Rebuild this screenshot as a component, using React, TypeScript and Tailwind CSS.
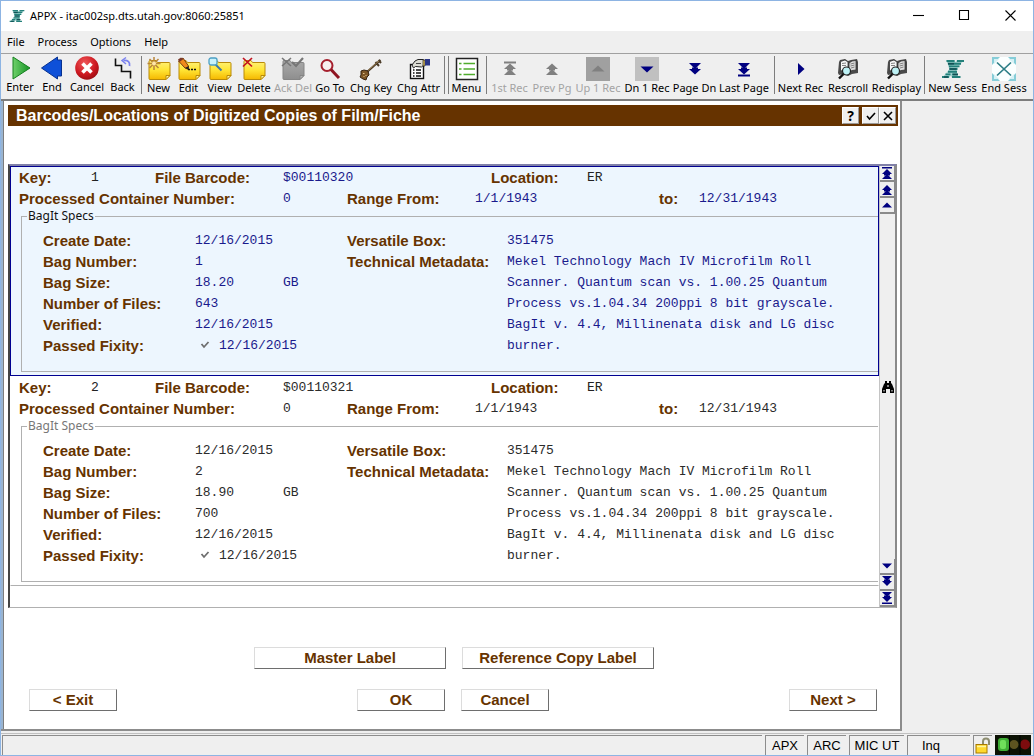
import type { ReactNode } from "react";

const NAVY = "#000080";
const GREY = "#808080";

function XLogo({ className }: { className: string }) {
  return (
    <svg viewBox="0 0 24 24" className={className} aria-hidden="true">
      <path d="M5.500 3h8l3.500 18h-6z" fill="#8cc4c0" />
      <path d="M16 3h7L8 21H1z" fill="#a5d3d0" />
      <path d="M5.500 4h8M16 4h7M7 6.700h7M14 6.700h6M8 9.400h10.500M8.500 12h8M7 14.700h9M4.500 17.400h5M11 17.400h6M1 20h7M11 20h8.500" stroke="#23807a" strokeWidth="1.900" />
      <path d="M7 6.700h6M8.500 12h7M12 17.400h5M3 20h4" stroke="#154f55" strokeWidth="1.500" />
    </svg>
  );
}

function Svg({ children }: { children: ReactNode }) {
  return (
    <svg viewBox="0 0 24 24" className="h-6 w-6" aria-hidden="true">
      {children}
    </svg>
  );
}

function Folder({ grey = false }: { grey?: boolean }) {
  const edge = grey ? "#858585" : "#b98a08";
  return (
    <>
      <defs>
        <linearGradient id={grey ? "note-grey" : "note"} x1="0" y1="0" x2="0" y2="1">
          <stop offset="0" stopColor={grey ? "#a8a8a8" : "#fff27e"} />
          <stop offset=".5" stopColor={grey ? "#9c9c9c" : "#ffe535"} />
          <stop offset="1" stopColor={grey ? "#8e8e8e" : "#f5b800"} />
        </linearGradient>
      </defs>
      <path d="M2 4.500Q2 3.500 3 3.500H9L10.500 5.500H22Q23 5.500 23 6.500V18.500L19 22.500H3Q2 22.500 2 21.500Z" fill={grey ? "url(#note-grey)" : "url(#note)"} stroke={edge} strokeWidth="1" />
      <path d="M23 18.500h-4v4z" fill={grey ? "#b5b5b5" : "#fff6a0"} stroke={edge} strokeWidth="1" />
    </>
  );
}

function Chevrons({ dir, count, bar, color }: { dir: "up" | "down"; count: number; bar?: boolean; color: string }) {
  return (
    <g transform={dir === "down" ? "rotate(180 12 12)" : undefined}>
      {count === 1 ? (
        <path d="M5.500 14.500h13l-6.500-6z" fill={color} />
      ) : (
        <>
          <path d="M6 12h12l-6-5.500z" fill={color} />
          <path d="M6 18h12l-6-6z" fill={color} />
          <path d="M6 12.500h12" stroke="#efefef" strokeWidth="1" />
          <path d="M9 13.500h6v-2H9z" fill={color} />
        </>
      )}
      {bar && <path d="M6 5.500h12" stroke={color} strokeWidth="2" />}
    </g>
  );
}

function Book() {
  return (
    <>
      <path d="M3 5l1-2 5-1 3 2 3-1 6-1 1 3v11l-6 1-4 2-4-2-5 1-1-2z" fill="#4a4a4a" />
      <path d="M4.500 4.500L9 3l3 2v9.500l-3-1.500-4.500 1z" fill="#f6f6f6" stroke="#333" strokeWidth=".8" />
      <path d="M20 3.500l-4 .5-3 2v9l3-1.500 4-.5z" fill="#dedede" stroke="#333" strokeWidth=".8" />
      <path d="M6 6.500l4-.5M6 8.500h4M14.500 7l4-1M14.500 9l4-1M15 11l3.500-1" stroke="#777" strokeWidth=".9" />
      <circle cx="10.500" cy="14" r="4" fill="#bdf1f5" stroke="#222" strokeWidth="1.200" />
      <path d="M7.500 17l-4.500 4.500" stroke="#111" strokeWidth="2.400" />
    </>
  );
}

type Tool = { label: string; width: string; icon: ReactNode; off?: boolean };

const groups: Tool[][] = [
  [
    {
      label: "Enter",
      width: "w-[34px]",
      icon: (
        <>
          <defs>
            <linearGradient id="go" x1="0" y1="0" x2="1" y2="0">
              <stop offset="0" stopColor="#6fd06a" />
              <stop offset="1" stopColor="#149324" />
            </linearGradient>
          </defs>
          <path d="M5 1l17 11L5 23z" fill="url(#go)" stroke="#15801f" />
        </>
      ),
    },
    { label: "End", width: "w-[30px]", icon: <path d="M17.500 1v3h4v16h-4v3L1.500 12z" fill="#0e50d8" stroke="#07318f" /> },
    {
      label: "Cancel",
      width: "w-[40px]",
      icon: (
        <>
          <defs>
            <radialGradient id="stop" cx=".4" cy=".3" r=".8">
              <stop offset="0" stopColor="#f0585a" />
              <stop offset=".6" stopColor="#cc1820" />
              <stop offset="1" stopColor="#8d0b10" />
            </radialGradient>
          </defs>
          <circle cx="12" cy="12" r="11.800" fill="url(#stop)" />
          <path d="M7.500 7.500l9 9M16.500 7.500l-9 9" stroke="#fff" strokeWidth="3.600" />
        </>
      ),
    },
    {
      label: "Back",
      width: "w-[31px]",
      icon: (
        <>
          <path d="M4.500 2.500v7h6v6h9v7" fill="none" stroke="#111" strokeWidth="1.600" />
          <path d="M18.500 10q1-6-6-5.500" fill="none" stroke="#7c83ee" strokeWidth="1.800" />
          <path d="M15 1.500l-4 3 4 3.500" fill="none" stroke="#7c83ee" strokeWidth="1.500" />
        </>
      ),
    },
  ],
  [
    {
      label: "New",
      width: "w-[29px]",
      icon: (
        <>
          <Folder />
          <path d="M7 0v13M.5 6.500h13M2.500 2l9 9M11.500 2l-9 9" stroke="#b9853a" strokeWidth="1.500" />
          <circle cx="7" cy="6.500" r="2" fill="#ffe6a8" />
        </>
      ),
    },
    {
      label: "Edit",
      width: "w-[31px]",
      icon: (
        <>
          <Folder />
          <path d="M1.500 4L6 1l5.500 8v3.500L8 11z" fill="#f08a1c" stroke="#6b3108" strokeWidth=".9" />
          <path d="M1 2.500L4 .5 6.500 2 2.500 5z" fill="#7a3a2a" />
          <path d="M8 11l3.500 1.500V9z" fill="#222" />
          <path d="M11 12.500h2m1 0h2m1 0h2" stroke="#111" strokeWidth="1.600" />
        </>
      ),
    },
    {
      label: "View",
      width: "w-[31px]",
      icon: (
        <>
          <Folder />
          <path d="M7 7l6.500 6.500" stroke="#3e76a8" strokeWidth="2" />
          <rect x="1" y="1" width="8" height="7" rx="2" fill="#c9f2fb" stroke="#4b9fc4" strokeWidth="1.300" />
        </>
      ),
    },
    {
      label: "Delete",
      width: "w-[38px]",
      icon: (
        <>
          <Folder />
          <path d="M1 1l9 8.500M10 1L1 9.500" stroke="#c3121d" strokeWidth="1.700" />
        </>
      ),
    },
    {
      label: "Ack Del",
      width: "w-[40px]",
      off: true,
      icon: (
        <>
          <Folder grey />
          <path d="M1 1l9 8M10 1L1 9" stroke="#777" strokeWidth="1.600" />
          <path d="M11 5l4 4 7-8" fill="none" stroke="#777" strokeWidth="2.200" />
        </>
      ),
    },
    {
      label: "Go To",
      width: "w-[34px]",
      icon: (
        <>
          <circle cx="9" cy="8.500" r="5.500" fill="#f8eeee" stroke="#a51f2d" strokeWidth="2" />
          <path d="M13 12.500l8 8.500" stroke="#8f1522" strokeWidth="3" />
        </>
      ),
    },
    {
      label: "Chg Key",
      width: "w-[48px]",
      icon: (
        <>
          <path d="M8 15L21.500 3M16.500 5l3.500 4M19.500 3l2.500 3" stroke="#4a3a26" strokeWidth="2" />
          <path d="M9 13.500L20 4" stroke="#a98a58" strokeWidth=".8" />
          <path d="M2 14l3-1 4 1 1 4-2 2-1 3-3-1-3-2 1-2z" fill="#7d5524" stroke="#352210" strokeWidth="1" />
          <path d="M4 16.500h1.500M6.500 18.500h1M4.500 19.500h1" stroke="#e3c48d" strokeWidth="1.200" />
        </>
      ),
    },
    {
      label: "Chg Attr",
      width: "w-[47px]",
      icon: (
        <>
          <rect x="3.500" y="7.500" width="13" height="14" fill="#fff" stroke="#111" strokeWidth="1.400" />
          <path d="M6 13h1.500m1.500 0h5M6 16h1.500m1.500 0h5M6 19h1.500m1.500 0h5" stroke="#111" strokeWidth="1.300" />
          <path d="M5 8l3-4 3-1.500h5l1.500 1v4l-3 2.500-6-.5-2 1.500z" fill="#dcdcd4" stroke="#222" />
          <path d="M9 6.500h5" stroke="#444" />
          <path d="M16 3h2v6h-2z" fill="#e8c65a" stroke="#222" strokeWidth=".7" />
          <path d="M18 2h5v6.500h-5z" fill="#2b3686" />
        </>
      ),
    },
  ],
  [
    {
      label: "Menu",
      width: "w-[33px]",
      icon: (
        <>
          <rect x="1.500" y="1.500" width="21" height="21" fill="#fff" stroke="#222" strokeWidth="1.500" />
          <path d="M8.500 6.500H20M8.500 12H20M8.500 17.500H20M4 6.500h2.500M4 12h2.500M4 17.500h2.500" stroke="#4fac2c" strokeWidth="1.700" />
        </>
      ),
    },
  ],
  [
    { label: "1st Rec", width: "w-[41px]", off: true, icon: <Chevrons dir="up" count={2} bar color={GREY} /> },
    { label: "Prev Pg", width: "w-[44px]", off: true, icon: <Chevrons dir="up" count={2} color={GREY} /> },
    {
      label: "Up 1 Rec",
      width: "w-[48px]",
      off: true,
      icon: (
        <>
          <path d="M0 0h24v24H0z" fill="#a0a0a0" />
          <Chevrons dir="up" count={1} color="#808080" />
        </>
      ),
    },
    {
      label: "Dn 1 Rec",
      width: "w-[50px]",
      icon: (
        <>
          <path d="M0 0h24v24H0z" fill="#c0c0c0" />
          <Chevrons dir="down" count={1} color={NAVY} />
        </>
      ),
    },
    { label: "Page Dn", width: "w-[45px]", icon: <Chevrons dir="down" count={2} color={NAVY} /> },
    { label: "Last Page", width: "w-[54px]", icon: <Chevrons dir="down" count={2} bar color={NAVY} /> },
  ],
  [
    { label: "Next Rec", width: "w-[47px]", icon: <path d="M9 6v12l6.500-6z" fill={NAVY} /> },
    { label: "Rescroll", width: "w-[48px]", icon: <Book /> },
    { label: "Redisplay", width: "w-[49px]", icon: <Book /> },
  ],
  [
    { label: "New Sess", width: "w-[51px]", icon: <XLogo className="h-6 w-6" /> },
    {
      label: "End Sess",
      width: "w-[52px]",
      icon: (
        <>
          <path d="M0 0h24v24H0z" fill="#fbffff" />
          <path d="M0 0h8L0 8zM24 0h-8l8 8zM0 24h8l-8-8zM24 24h-8l8-8z" fill="#86cdd8" />
          <path d="M2 2h5L2 7zM22 2h-5l5 5zM2 22h5l-5-5zM22 22h-5l5-5z" fill="#d5f1f5" />
          <path d="M5 5.500l14 13M19 5.500l-14 13" stroke="#2c7e86" strokeWidth="1.700" />
        </>
      ),
    },
  ],
];

const seps = ["", "single", "double", "single", "single", "single"];

function Separator({ double }: { double: boolean }) {
  return (
    <div className={double ? "flex w-2 shrink-0 justify-center gap-[3px]" : "flex w-[6px] shrink-0 justify-center"}>
      <div className="h-[38px] w-px bg-[#7d7d7d]" />
      {double && <div className="h-[38px] w-px bg-[#7d7d7d]" />}
    </div>
  );
}

function Toolbar() {
  return (
    <div className="flex h-[46px] items-start border-t border-[#a0a0a0] pl-[2px] pt-[2px] text-[11px] leading-[13px]">
      {groups.map((group, i) => (
        <div key={i} className="flex items-center">
          {seps[i] && <Separator double={seps[i] === "double"} />}
          {group.map((t) => (
            <button
              key={t.label}
              type="button"
              disabled={t.off}
              className={`flex flex-col items-center whitespace-nowrap ${t.width} ${t.off ? "text-[#a3a3a3]" : "text-black"}`}
            >
              <Svg>{t.icon}</Svg>
              <span>{t.label}</span>
            </button>
          ))}
        </div>
      ))}
    </div>
  );
}

function Label({ className = "", children }: { className?: string; children: ReactNode }) {
  return <span className={`shrink-0 font-[Liberation_Sans,Arial,sans-serif] text-[15px] font-bold text-[#663300] ${className}`}>{children}</span>;
}

function RecordPanel({ n, barcode, size, files, active }: { n: number; barcode: string; size: string; files: number; active: boolean }) {
  const value = active ? "text-[#1a1a8c]" : "text-[#2b2b2b]";
  const specs: [string, string][] = [
    ["Create Date:", "12/16/2015"],
    ["Bag Number:", String(n)],
    ["Bag Size:", size],
    ["Number of Files:", String(files)],
    ["Verified:", "12/16/2015"],
  ];
  return (
    <article
      className={`whitespace-nowrap border pb-[3px] font-[Liberation_Mono,monospace] text-[13px] leading-[21px] ${value} ${
        active ? "border-[#000090] bg-[#edf6fe]" : "border-x-transparent border-t-transparent border-b-[#b0b0b0]"
      }`}
    >
      <div className="flex h-[21px] pl-2">
        <Label className="w-[72px]">Key:</Label>
        <span className="w-16 text-[#222]">{n}</span>
        <Label className="w-32">File Barcode:</Label>
        <span className="w-[208px]">{barcode}</span>
        <Label className="w-24">Location:</Label>
        <span className="text-[#222]">ER</span>
      </div>
      <div className="flex h-[21px] pl-2">
        <Label className="w-[264px]">Processed Container Number:</Label>
        <span className="w-16">0</span>
        <Label className="w-32">Range From:</Label>
        <span className="w-[184px]">1/1/1943</span>
        <Label className="w-10">to:</Label>
        <span>12/31/1943</span>
      </div>
      <fieldset className="ml-[10px] border border-r-0 border-[#b0b0b0] pb-[15px] pl-[21px] pt-[7px]">
        <legend className={`-ml-4 px-px font-[Noto_Sans,sans-serif] text-[12px] leading-[14px] ${active ? "text-[#111]" : "text-[#777]"}`}>
          BagIt Specs
        </legend>
        <div className="flex">
          <div className="w-[304px] shrink-0">
            {specs.map(([k, v]) => (
              <div key={k} className="flex h-[21px]">
                <Label className="w-[152px]">{k}</Label>
                <span className="w-[88px]">{v}</span>
                {k === "Bag Size:" && <span>GB</span>}
              </div>
            ))}
            <div className="flex h-[21px] items-center">
              <label htmlFor={`fixity-${n}`} className="w-[152px] shrink-0 font-[Liberation_Sans,Arial,sans-serif] text-[15px] font-bold text-[#663300]">
                Passed Fixity:
              </label>
              <span className="grid w-6 place-items-center pr-1">
                <input id={`fixity-${n}`} type="checkbox" defaultChecked className="peer col-start-1 row-start-1 h-3 w-3 appearance-none" />
                <svg viewBox="0 0 12 12" className="pointer-events-none invisible col-start-1 row-start-1 h-3 w-3 peer-checked:visible" aria-hidden="true">
                  <path d="M2.500 4l2.500 3 4.500-5" fill="none" stroke="#6e6e6e" strokeWidth="1.800" />
                </svg>
              </span>
              <span>12/16/2015</span>
            </div>
          </div>
          <Label className="w-40">
            Versatile Box:
            <br />
            Technical Metadata:
          </Label>
          <div className="min-w-0 flex-1">
            <p>351475</p>
            <p>
              Mekel Technology Mach IV Microfilm Roll
              <br />
              Scanner. Quantum scan vs. 1.00.25 Quantum
              <br />
              Process vs.1.04.34 200ppi 8 bit grayscale.
              <br />
              BagIt v. 4.4, Millinenata disk and LG disc
              <br />
              burner.
            </p>
          </div>
        </div>
      </fieldset>
    </article>
  );
}

function ScrollButton({ label, dir, count, bar }: { label: string; dir: "up" | "down"; count: number; bar?: boolean }) {
  return (
    <button type="button" aria-label={label} className="grid h-4 w-[15px] place-items-center border-b-2 border-r border-[#8a8a8a] bg-[#efefef]">
      <svg viewBox="0 0 12 12" className="h-3 w-3" aria-hidden="true">
        <g transform={dir === "down" ? "rotate(180 6 6)" : undefined} fill={NAVY}>
          {count === 1 ? (
            <path d="M1 8.500h10L6 3.500z" />
          ) : (
            <>
              <path d="M1 7h10L6 2z" />
              <path d="M1 12h10L6 7z" />
              <path d="M3 7h6v1.500H3z" />
            </>
          )}
          {bar && <path d="M1 0h10v1.500H1z" />}
        </g>
      </svg>
    </button>
  );
}

function ActionButton({ wide, children }: { wide?: boolean; children: ReactNode }) {
  return (
    <button
      type="button"
      className={`h-[22px] border border-b-[#6e6e6e] border-l-[#dcdcdc] border-r-[#6e6e6e] border-t-[#dcdcdc] bg-white font-[Liberation_Sans,Arial,sans-serif] text-[15px] font-bold leading-5 text-[#663300] ${
        wide ? "w-48" : "w-[88px]"
      }`}
    >
      {children}
    </button>
  );
}

function HeaderButton({ label, children }: { label: string; children: ReactNode }) {
  return (
    <button type="button" aria-label={label} className="grid h-[17px] w-[17px] place-items-center border border-b-[#999] border-l-white border-r-[#999] border-t-white bg-[#f0f0f0] text-[14px] font-bold leading-none text-black">
      {children}
    </button>
  );
}

function StatusCell({ className, children }: { className: string; children?: ReactNode }) {
  return <div className={`flex h-5 items-center border-l border-t border-[#8c8c8c] ${className}`}>{children}</div>;
}

export default function App() {
  return (
    <div className="flex min-h-screen flex-col border border-[#8db4e3] bg-[#efefef] font-[Noto_Sans,sans-serif] text-[11px] text-black">
      <header className="flex h-[30px] items-center bg-white pl-2">
        <XLogo className="h-4 w-4" />
        <h1 className="ml-[5px] flex-1">APPX - itac002sp.dts.utah.gov:8060:25851</h1>
        <div className="flex gap-[26px] pr-[13px]">
          {[
            ["Minimize", "M5 9.500h11"],
            ["Maximize", "M5.500 4.500h9v9h-9z"],
            ["Close", "M5.500 4.500l10 10M15.500 4.500l-10 10"],
          ].map(([name, d]) => (
            <button key={name} type="button" aria-label={name} className="h-5 w-5">
              <svg viewBox="0 0 20 20" className="h-5 w-5" aria-hidden="true">
                <path d={d} fill="none" stroke="#000" strokeWidth="1.100" />
              </svg>
            </button>
          ))}
        </div>
      </header>

      <nav className="flex h-[22px] items-center gap-[13px] pl-[6px]">
        {["File", "Process", "Options", "Help"].map((m) => (
          <button key={m} type="button">
            {m}
          </button>
        ))}
      </nav>

      <Toolbar />

      <main className="flex flex-1 border-t-2 border-[#7d7d7d]">
        <section className="flex min-w-0 flex-1 flex-col border-b-2 border-r-2 border-[#8c8c8c]">
          <div className="flex flex-1 border-l-2 border-[#99b4d1]">
            <div className="flex min-w-0 flex-1 flex-col border-l border-[#7d7d7d] bg-white pl-1 pt-1">
              <div className="mr-[2px] flex h-[21px] items-center bg-[#663300] pl-2 pr-[2px]">
                <h2 className="flex-1 pt-px font-[Liberation_Sans,Arial,sans-serif] text-[16px] font-bold text-white">
                  Barcodes/Locations of Digitized Copies of Film/Fiche
                </h2>
                <HeaderButton label="Help">?</HeaderButton>
                <span className="w-[3px]" />
                <HeaderButton label="Accept">
                  <svg viewBox="0 0 12 12" className="h-3 w-3" aria-hidden="true">
                    <path d="M2 6l2.500 3L10 3" fill="none" stroke="#000" strokeWidth="1.600" />
                  </svg>
                </HeaderButton>
                <HeaderButton label="Dismiss">
                  <svg viewBox="0 0 12 12" className="h-3 w-3" aria-hidden="true">
                    <path d="M2 2l8 8M10 2l-8 8" stroke="#000" strokeWidth="1.600" />
                  </svg>
                </HeaderButton>
              </div>

              <div className="mr-[3px] mt-[38px] flex border-2 border-b border-b-[#b0b0b0] border-l-[#444] border-r-[#8a8a8a] border-t-[#8080a8]">
                <div className="min-w-0 flex-1 border-r border-[#c4c4c4] pb-[21px]">
                  <RecordPanel n={1} barcode="$00110320" size="18.20" files={643} active />
                  <RecordPanel n={2} barcode="$00110321" size="18.90" files={700} active={false} />
                </div>
                <div className="flex w-[15px] flex-col bg-[#efefef]">
                  <ScrollButton label="First record" dir="up" count={2} bar />
                  <ScrollButton label="Previous page" dir="up" count={2} />
                  <ScrollButton label="Previous record" dir="up" count={1} />
                  <div className="grid flex-1 place-items-center">
                    <svg viewBox="0 0 12 12" className="h-3 w-3" aria-hidden="true">
                      <path d="M3 0h2v2h2V0h2v2l1 1 2 5v4H8V8H4v4H0V8l2-5 1-1z" fill="#000" />
                      <path d="M1.500 9v1.500h1V9zM9.500 9v1.500h1V9zM5.500 4v2h1V4z" fill="#fff" />
                    </svg>
                  </div>
                  <ScrollButton label="Next record" dir="down" count={1} />
                  <ScrollButton label="Next page" dir="down" count={2} />
                  <ScrollButton label="Last record" dir="down" count={2} bar />
                </div>
              </div>

              <div className="mt-[39px] flex justify-center gap-4">
                <ActionButton wide>Master Label</ActionButton>
                <ActionButton wide>Reference Copy Label</ActionButton>
              </div>
              <div className="mb-4 mt-5 flex justify-between pl-[21px] pr-[23px]">
                <ActionButton>&lt; Exit</ActionButton>
                <div className="flex gap-4">
                  <ActionButton>OK</ActionButton>
                  <ActionButton>Cancel</ActionButton>
                </div>
                <ActionButton>Next &gt;</ActionButton>
              </div>
            </div>
          </div>
        </section>
        <aside className="w-[131px] shrink-0" />
      </main>

      <footer className="mt-[2px] flex gap-[3px] border-t border-[#c0c0c0] pl-px pr-[2px] pt-px font-[Liberation_Sans,Arial,sans-serif] text-[13px]">
        <StatusCell className="flex-1" />
        <StatusCell className="w-[39px] justify-center">APX</StatusCell>
        <StatusCell className="w-[39px] justify-center">ARC</StatusCell>
        <StatusCell className="w-[55px] justify-center">MIC UT</StatusCell>
        <StatusCell className="w-[63px] pl-[14px]">Inq</StatusCell>
        <StatusCell className="w-[19px] justify-center">
          <svg viewBox="0 0 18 18" className="h-[18px] w-[18px]" aria-hidden="true">
            <path d="M9 8V4.500Q9 1.500 12 1.500T15 4.500V8" fill="none" stroke="#8d8d70" strokeWidth="2" />
            <rect x="2" y="7.500" width="11" height="8.500" fill="#ffd92e" stroke="#a87a00" />
            <path d="M3 9.500h9" stroke="#fff6a0" strokeWidth="1.500" />
          </svg>
        </StatusCell>
        <svg viewBox="0 0 36 20" className="h-5 w-9" aria-hidden="true">
          <path d="M0 0h36v20H0z" fill="#0c1204" />
          <rect x="3" y="3" width="11" height="13" rx="3" fill="#3fae35" />
          <rect x="5" y="5" width="6" height="9" rx="2" fill="#6fe05a" />
          <circle cx="19" cy="9.500" r="4.500" fill="#5d5420" />
          <circle cx="30" cy="9.500" r="5" fill="#7c0c0e" />
          <path d="M14.500 0v20M25 0v20" stroke="#000" strokeWidth="1" />
        </svg>
      </footer>
    </div>
  );
}
